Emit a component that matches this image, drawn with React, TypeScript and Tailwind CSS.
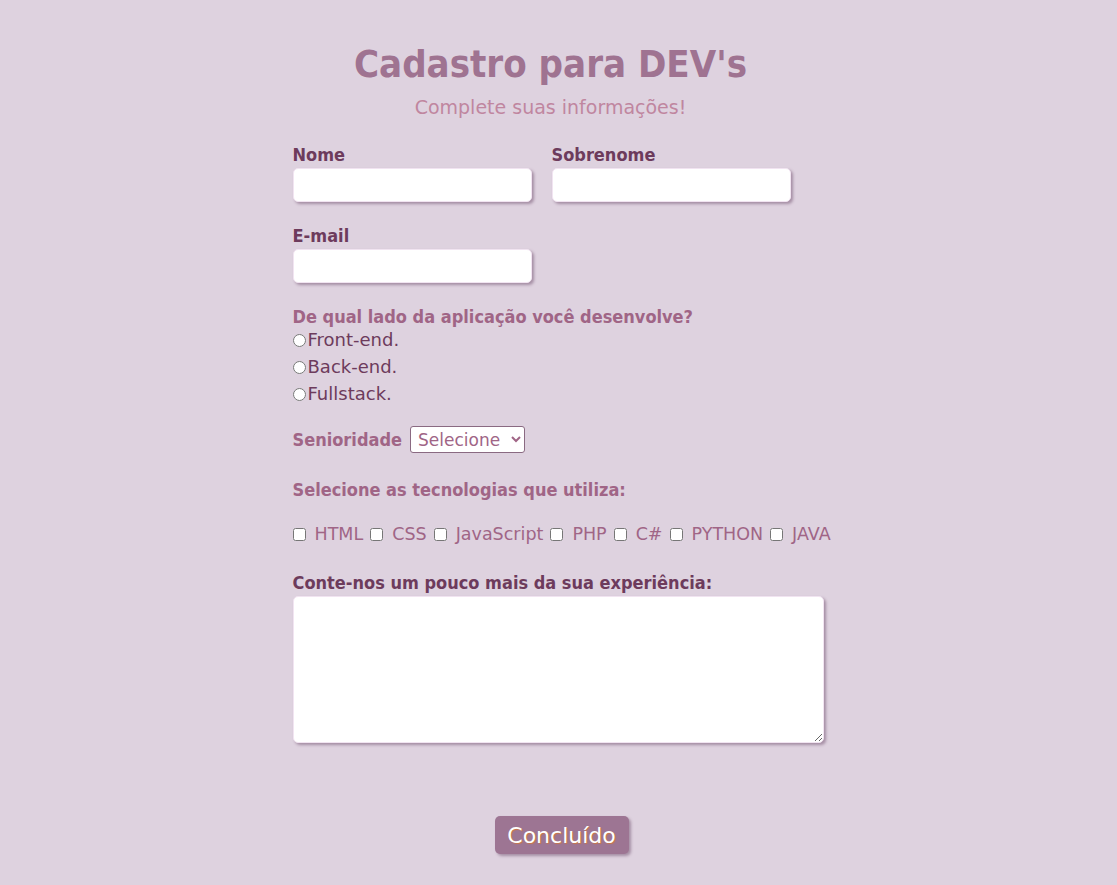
import React from 'react';

const techs = ['HTML', 'CSS', 'JavaScript', 'PHP', 'C#', 'PYTHON', 'JAVA'];
const sides = ['Front-end.', 'Back-end.', 'Fullstack.'];

const inputClass =
  'w-[239px] h-[34px] bg-white rounded-[5px] border border-[#f1e4f1] shadow-[2px_2px_3px_#a58ea4] outline-none';

const bold = "font-['DejaVu_Sans_Condensed','DejaVu_Sans',sans-serif] font-bold";

const App: React.FC = () => {
  return (
    <div className="min-h-[885px] bg-[#ded2df] font-['Trebuchet_MS','DejaVu_Sans',sans-serif] pt-[36px] pb-[31px]">
      <div className="text-center pr-[16px]">
        <h1 className={`text-[38px] leading-[56px] text-[#9f7391] ${bold}`}>Cadastro para DEV's</h1>
        <p className="text-[19px] leading-[26px] text-[#c0869f] mt-[2px]">Complete suas informações!</p>
      </div>

      <form className="w-[532px] mx-auto mt-[21px]">
        {/* Nome / Sobrenome */}
        <div className="flex gap-[20px]">
          <div className="flex flex-col">
            <label className={`text-[18px] leading-[27px] text-[#6d3b5c] ${bold}`}>Nome</label>
            <input type="text" className={inputClass} />
          </div>
          <div className="flex flex-col">
            <label className={`text-[18px] leading-[27px] text-[#6d3b5c] ${bold}`}>Sobrenome</label>
            <input type="text" className={inputClass} />
          </div>
        </div>

        {/* E-mail */}
        <div className="flex flex-col mt-[20px]">
          <label className={`text-[18px] leading-[27px] text-[#6d3b5c] ${bold}`}>E-mail</label>
          <input type="email" className={inputClass} />
        </div>

        {/* Lado */}
        <div className="mt-[22px]">
          <p className={`text-[18px] leading-[24px] text-[#a06586] ${bold}`}>De qual lado da aplicação você desenvolve?</p>
          <div className="flex flex-col gap-[5px] text-[18px] leading-[22px] text-[#6d3b5c]">
            {sides.map((s) => (
              <label key={s} className="flex items-center">
                <input type="radio" name="lado" className="w-[13px] h-[13px] m-0 mr-[2px] accent-[#6d3b5c]" />
                <span>{s}</span>
              </label>
            ))}
          </div>
        </div>

        {/* Senioridade */}
        <div className="mt-[21px] flex items-center gap-[8px]">
          <label className={`text-[18px] leading-[24px] text-[#a06586] ${bold}`}>Senioridade</label>
          <select className="h-[27px] w-[115px] bg-white border border-[#8a6a82] rounded-[3px] text-[17px] text-[#a06586] pl-[3px] font-['Trebuchet_MS','DejaVu_Sans',sans-serif]">
            <option>Selecione</option>
          </select>
        </div>

        {/* Tecnologias */}
        <p className={`mt-[25px] text-[18px] leading-[24px] text-[#a06586] ${bold}`}>Selecione as tecnologias que utiliza:</p>
        <div className="mt-[20px] flex items-center flex-nowrap whitespace-nowrap text-[17.5px] leading-[24px] text-[#a06586]">
          {techs.map((t) => (
            <label key={t} className="flex items-center mr-[7px]">
              <input type="checkbox" className="w-[13px] h-[13px] m-0 mr-[9px] accent-[#6d3b5c]" />
              <span>{t}</span>
            </label>
          ))}
        </div>

        {/* Experiência */}
        <div className="mt-[23px] flex flex-col">
          <label className={`text-[18px] leading-[27px] text-[#6d3b5c] ${bold}`}>Conte-nos um pouco mais da sua experiência:</label>
          <textarea className="w-[531px] h-[147px] bg-white rounded-[5px] border border-[#f1e4f1] shadow-[2px_2px_3px_#a58ea4] outline-none" />
        </div>

        <div className="flex justify-center mt-[73px] pl-[6px]">
          <button
            type="button"
            className="w-[134px] h-[38px] bg-[#9d7593] rounded-[5px] text-[22px] text-white shadow-[2px_2px_3px_#a58ea4] [text-shadow:1px_1px_1px_#c9774a]"
          >
            Concluído
          </button>
        </div>
      </form>
    </div>
  );
};

export default App;
